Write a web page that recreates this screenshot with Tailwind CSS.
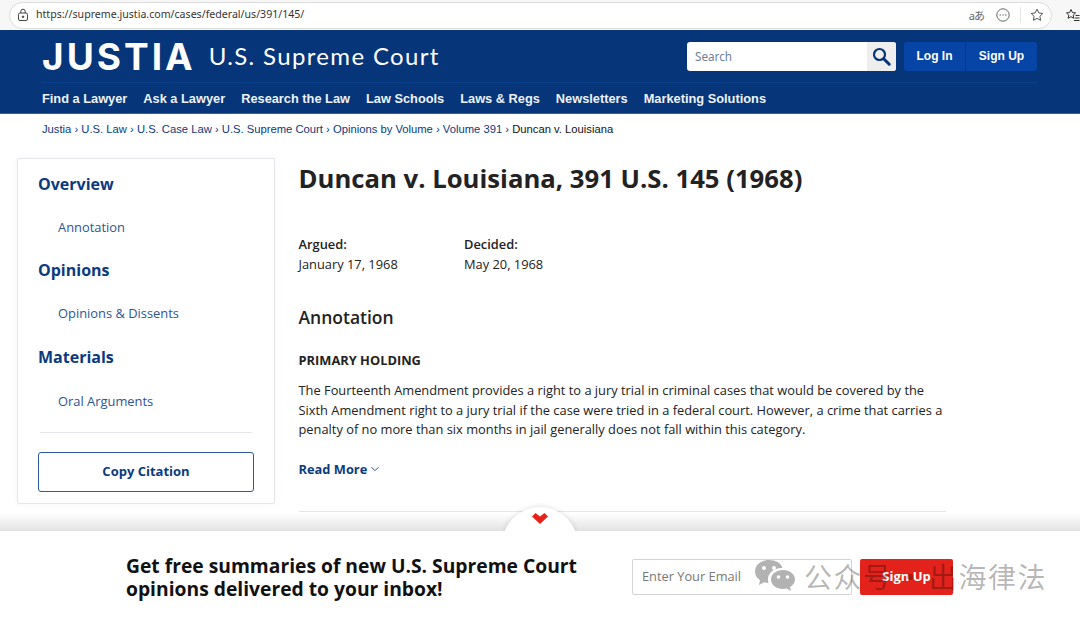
<!DOCTYPE html>
<html lang="en">
<head>
    <meta charset="UTF-8">
    <meta name="viewport" content="width=device-width, initial-scale=1.0">
    <title>Duncan v. Louisiana, 391 U.S. 145 (1968)</title>
    <script src="https://cdn.jsdelivr.net/npm/@tailwindcss/browser@4"></script>
</head>
<body class="relative h-[620px] w-[1080px] overflow-hidden bg-white font-['Open_Sans',sans-serif] text-[#222]">

    <!-- Browser address bar -->
    <div class="flex h-[30px] items-center bg-[#f7f7f7] pl-[9px]">
        <div class="flex h-[27px] w-[1043px] items-center rounded-full border border-[#dcdcdc] bg-white pl-[6px] pr-[7px]">
            <svg class="h-[14px] w-[14px] text-[#444]" viewBox="0 0 14 14" fill="none" stroke="currentColor" stroke-width="1"><rect x="2.5" y="5" width="9" height="7.5" rx="1.5"/><path d="M4.8 5V3.4a2.2 2.2 0 0 1 4.4 0V5"/><circle cx="7" cy="8.8" r=".8" fill="currentColor"/></svg>
            <span class="ml-[6px] font-['Noto_Sans',sans-serif] text-[10.6px] text-[#333]">https://supreme.justia.com/cases/federal/us/391/145/</span>
            <div class="ml-auto flex items-center">
                <span class="font-['Noto_Sans','Noto_Sans_CJK_JP',sans-serif] text-[11px] leading-none tracking-[-1px] text-[#666]">aあ</span>
                <svg class="ml-[12px] h-[14px] w-[14px] text-[#666]" viewBox="0 0 14 14" fill="none" stroke="currentColor" stroke-width="1"><circle cx="7" cy="7" r="6.2"/><circle cx="4.2" cy="7" r=".7" fill="currentColor" stroke="none"/><circle cx="7" cy="7" r=".7" fill="currentColor" stroke="none"/><circle cx="9.8" cy="7" r=".7" fill="currentColor" stroke="none"/></svg>
                <div class="ml-[10px] mr-[9px] h-[16px] w-px bg-[#e4e4e4]"></div>
                <svg class="h-[14px] w-[14px] text-[#555]" viewBox="0 0 14 14" fill="none" stroke="currentColor" stroke-width="1"><path d="M7 1.2l1.8 3.7 4 .6-2.9 2.8.7 4L7 10.4l-3.6 1.9.7-4L1.2 5.5l4-.6z" stroke-linejoin="round"/></svg>
            </div>
        </div>
        <svg class="ml-[13px] h-[15px] w-[15px] text-[#333]" viewBox="0 0 15 15" fill="none" stroke="currentColor" stroke-width="1"><path d="M6 1.5l1.4 3 3.2.4-2.4 2.2.7 3.2L6 8.7l-2.9 1.6.7-3.2L1.4 4.9l3.2-.4z" stroke-linejoin="round"/><path d="M10.500 7.500h4M10 10h4.500M9 12.500h5.500"/></svg>
    </div>

    <!-- Site header -->
    <header class="h-[84px] border-b border-[#3a5f96] bg-[#06357a]">
        <div class="ml-[41px] w-[996px]">
            <div class="flex h-[53px] items-center border-b border-[#0a3f8a]">
                <span class="pl-px font-['Inter',sans-serif] text-[37px] leading-none font-bold tracking-[3px] text-white">JUSTIA</span>
                <span class="ml-[13px] font-['Lato',sans-serif] text-[24px] leading-none tracking-[1.35px] text-white">U.S. Supreme Court</span>
                <div class="ml-auto flex h-[29px] w-[209px] overflow-hidden rounded-[3px] bg-white">
                    <span class="flex-1 pl-[8px] font-['Noto_Sans',sans-serif] text-[11.7px] leading-[29px] text-[#6d7f99]">Search</span>
                    <div class="flex w-[29px] items-center justify-center bg-[#eeeeee]">
                        <svg class="h-[19px] w-[19px] text-[#06357a]" viewBox="0 0 19 19" fill="none" stroke="currentColor"><circle cx="7.5" cy="7.5" r="5.5" stroke-width="2.2"/><path d="M11.700 11.700l5.500 5.500" stroke-width="3" stroke-linecap="round"/></svg>
                    </div>
                </div>
                <div class="ml-[8px] flex h-[29px] gap-px font-['Liberation_Sans',sans-serif] text-[12px] leading-[29px] font-bold text-white">
                    <span class="w-[61px] rounded-l-[3px] bg-[#0645a5] text-center">Log In</span>
                    <span class="w-[71px] rounded-r-[3px] bg-[#0645a5] text-center">Sign Up</span>
                </div>
            </div>
            <nav class="flex h-[30px] items-center gap-[16px] pt-[2px] pl-px font-['Liberation_Sans',sans-serif] text-[12.8px] font-bold text-[#eef2f8]">
                <span>Find a Lawyer</span>
                <span>Ask a Lawyer</span>
                <span>Research the Law</span>
                <span>Law Schools</span>
                <span>Laws &amp; Regs</span>
                <span>Newsletters</span>
                <span>Marketing Solutions</span>
            </nav>
        </div>
    </header>

    <!-- Breadcrumb -->
    <div class="pt-[7px] pl-[42px] font-['Liberation_Sans',sans-serif] text-[11.24px] leading-[16px] text-[#0b3a80]">
        Justia › U.S. Law › U.S. Case Law › U.S. Supreme Court › Opinions by Volume › Volume 391 › <span class="text-[#111]">Duncan v. Louisiana</span>
    </div>

    <main class="mt-[21px] flex pl-[17px]">
        <!-- Sidebar -->
        <aside class="h-[346px] w-[258px] rounded-[2px] border border-[#e4e6ea] bg-white px-[20px] pt-[13px] shadow-[0_0_8px_rgba(0,0,0,.04)]">
            <h3 class="text-[16px] leading-[24px] font-bold text-[#0b3a80]">Overview</h3>
            <p class="mt-[21px] pl-[20px] text-[12.9px] leading-[20px] text-[#2d5590]">Annotation</p>
            <h3 class="mt-[20.5px] text-[16px] leading-[24px] font-bold text-[#0b3a80]">Opinions</h3>
            <p class="mt-[21.5px] pl-[20px] text-[12.9px] leading-[20px] text-[#2d5590]">Opinions &amp; Dissents</p>
            <h3 class="mt-[21.5px] text-[16px] leading-[24px] font-bold text-[#0b3a80]">Materials</h3>
            <p class="mt-[22px] pl-[20px] text-[12.9px] leading-[20px] text-[#2d5590]">Oral Arguments</p>
            <div class="mx-[2px] mt-[21px] h-px bg-[#e4e6ea]"></div>
            <div class="mt-[19px] flex h-[40px] items-center justify-center rounded-[3px] border border-[#2d5a9a] pt-px text-[13px] font-bold text-[#0b3a80]">Copy Citation</div>
        </aside>

        <!-- Case content -->
        <article class="ml-[23.5px] w-[647px]">
            <h1 class="pt-px text-[25.7px] leading-[40px] font-bold text-[#222]">Duncan v. Louisiana, 391 U.S. 145 (1968)</h1>
            <div class="mt-[35px] flex text-[12.85px] leading-[20px]">
                <div class="w-[165.5px]"><p class="font-semibold">Argued:</p><p>January 17, 1968</p></div>
                <div><p class="font-semibold">Decided:</p><p>May 20, 1968</p></div>
            </div>
            <h2 class="mt-[29px] text-[17.5px] leading-[28px] font-semibold">Annotation</h2>
            <h3 class="mt-[19px] text-[12.85px] leading-[20px] font-bold">PRIMARY HOLDING</h3>
            <p class="mt-[11px] text-[12.85px] leading-[19.5px]">The Fourteenth Amendment provides a right to a jury trial in criminal cases that would be covered by the Sixth Amendment right to a jury trial if the case were tried in a federal court. However, a crime that carries a penalty of no more than six months in jail generally does not fall within this category.</p>
            <div class="mt-[19px] flex items-center text-[12.85px] leading-[20px] font-bold text-[#0b3a80]">
                Read More
                <svg class="ml-[4px] h-[6px] w-[8px] text-[#2d5590]" viewBox="0 0 8 6" fill="none" stroke="currentColor" stroke-width="1"><path d="M.5 1.200L4 4.700l3.500-3.500"/></svg>
            </div>
            <div class="mt-[32px] h-px bg-[#e4e6ea]"></div>
        </article>
    </main>

    <!-- Newsletter bar pinned to the bottom -->
    <div class="absolute inset-x-0 top-[513px] h-[18px] bg-gradient-to-b from-white/0 to-[#e2e2e2]"></div>
    <div class="absolute top-[507px] left-[502px] h-[76px] w-[76px] rounded-full bg-white shadow-[0_-1px_5px_rgba(0,0,0,.10)]">
        <svg class="absolute top-[6px] left-[30px] h-[11px] w-[16px] text-[#e5231b]" viewBox="0 0 16 11" fill="currentColor"><path d="M0 3.500L3.500 0 8 3.500 12.500 0 16 3.500 8 11z"/></svg>
    </div>
    <div class="absolute inset-x-0 top-[531px] flex h-[89px] items-center bg-white pt-[3px] pl-[126px]">
        <p class="w-[480px] text-[19.27px] leading-[23.5px] font-bold text-[#111]">Get free summaries of new U.S. Supreme Court opinions delivered to your inbox!</p>
        <div class="ml-[26px] flex h-[36px] w-[220px] items-center rounded-[2px] border border-[#d4d4d4] pl-[9px] text-[12.8px] text-[#777]">Enter Your Email</div>
        <div class="ml-[8px] flex h-[36px] w-[93px] items-center justify-center rounded-[2px] bg-[#e3231b] text-[13px] font-bold text-white">Sign Up</div>
    </div>

    <!-- WeChat watermark -->
    <div class="absolute top-[559px] left-[754px] flex items-center text-black/30">
        <svg class="h-[34px] w-[42px]" viewBox="0 0 42 34" fill="currentColor">
            <path d="M15 1C7 1 1 6 1 12.500c0 3.700 2 6.700 5 8.800L5 26l5-2.700c1.500.4 3 .6 4.500.6-.4-1.200-.6-2.400-.6-3.600 0-6.300 6-11.400 13.600-11.400h.9C27 3.900 21.500 1 15 1z"/>
            <path d="M41 20.500c0-5.500-5.500-9.500-12-9.500-6.700 0-12 4-12 9.500S22.300 30 29 30c1.300 0 2.600-.2 3.800-.5L37 32l-1-3.900c3-1.800 5-4.500 5-7.600z"/>
            <circle cx="10" cy="9" r="2" fill="#fff"/><circle cx="20" cy="9" r="2" fill="#fff"/>
            <circle cx="24.500" cy="18" r="1.800" fill="#fff"/><circle cx="33.500" cy="18" r="1.800" fill="#fff"/>
        </svg>
        <span class="ml-[8px] font-['Noto_Sans_CJK_SC',sans-serif] text-[28px] leading-none tracking-[1.5px]">公众号<span class="px-[3.5px]">·</span>出海律法</span>
    </div>
</body>
</html>
